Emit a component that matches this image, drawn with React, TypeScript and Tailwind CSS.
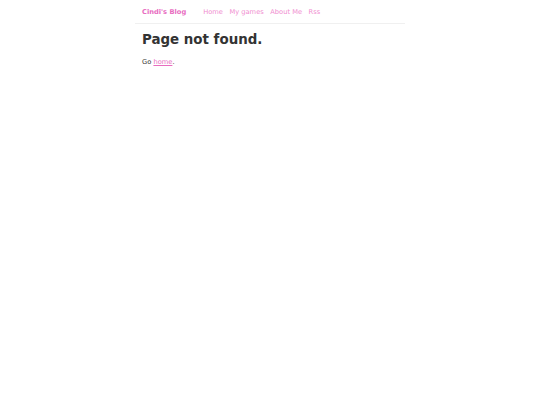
export default function App() {
  return (
    <div className="min-h-[405px] bg-white" style={{ fontFamily: '"DejaVu Sans", Verdana, sans-serif' }}>
      <div className="w-[270px] mx-auto">
        <header className="flex items-baseline px-[7px] pt-[7px] pb-[5px] border-b border-[#f0f0f0] text-[6.7px] leading-[11px]">
          <a className="font-bold text-[#e86dbf] mr-[17px]">Cindi's Blog</a>
          <nav className="flex gap-[6.5px] text-[#f08dcf]">
            <a>Home</a>
            <a>My games</a>
            <a>About Me</a>
            <a>Rss</a>
          </nav>
        </header>
        <main className="px-[7px]">
          <h1 className="text-[13.4px] font-bold text-[#333] leading-[16px] mt-[8px]">Page not found.</h1>
          <p className="text-[6.7px] text-[#333] mt-[9px] leading-[10px]">
            Go <a className="text-[#e86dbf] underline">home</a>.
          </p>
        </main>
      </div>
    </div>
  );
}
